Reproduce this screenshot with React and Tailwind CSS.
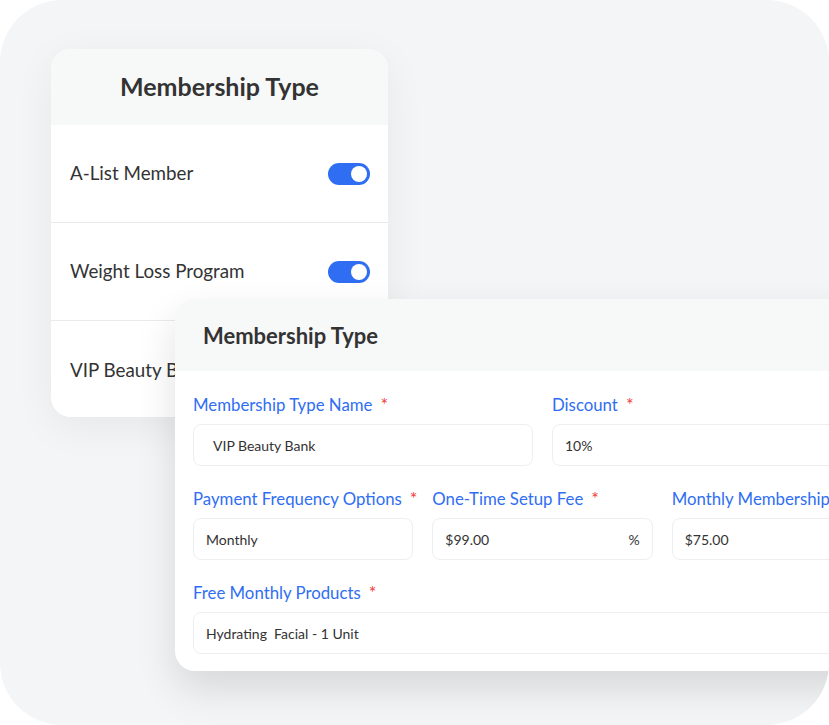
import React from "react";

const Toggle = () => (
  <div className="w-[42px] h-[22px] rounded-full bg-[#2f6ef3] flex items-center justify-end pr-[3px]">
    <div className="w-[16px] h-[16px] rounded-full bg-white" />
  </div>
);

const Label = ({ text }) => (
  <div className="h-[16px] text-[16.8px] text-[#2f6ef3] leading-[12px] mb-[13px] whitespace-nowrap">
    {text}
    <span className="text-[#f23b3b] ml-[8px] text-[18px] leading-none">*</span>
  </div>
);

const Field = ({ value, suffix, pad = "pl-[12px]" }) => (
  <div
    className={`h-[42px] rounded-[8px] border border-[#eceef1] bg-white flex items-center justify-between ${pad} pr-[12px] text-[14px] text-[#333]`}
  >
    <span className="whitespace-pre">{value}</span>
    {suffix && <span>{suffix}</span>}
  </div>
);

const App = () => {
  const types = ["A-List Member", "Weight Loss Program", "VIP Beauty Bank"];

  return (
    <div className="w-[829px] h-[725px] bg-white" style={{ fontFamily: "Lato, 'Noto Sans', sans-serif" }}>
      <div className="relative w-full h-full bg-[#f4f5f7] rounded-[62px] overflow-hidden pt-[49px] pl-[51px]">
        {/* back card */}
        <div className="w-[337px] h-[368px] bg-white rounded-[20px] overflow-hidden shadow-[0_10px_40px_rgba(0,0,0,0.06)]">
          <div className="h-[76px] bg-[#f7f8f8] flex items-center justify-center">
            <h2 className="text-[25px] font-bold text-[#333]">Membership Type</h2>
          </div>
          {types.map((t, i) => (
            <div
              key={t}
              className={`h-[98px] flex items-center justify-between pl-[19px] pr-[18px] ${i < 2 ? "border-b border-[#e9eaec]" : ""}`}
            >
              <span className="text-[18.8px] text-[#333] whitespace-nowrap">{t}</span>
              {i < 2 && <Toggle />}
            </div>
          ))}
        </div>

        {/* front card */}
        <div className="absolute left-[175px] top-[299px] w-[735px] h-[372px] bg-white rounded-[20px] overflow-hidden shadow-[0_18px_40px_rgba(0,0,0,0.12)]">
          <div className="h-[72px] bg-[#f7f8f8] flex items-center pl-[28px]">
            <h2 className="text-[22px] font-bold text-[#333]">Membership Type</h2>
          </div>
          <div className="px-[18px] pt-[24px] flex flex-col gap-[23px]">
            <div className="grid grid-cols-2 gap-[19px]">
              <div>
                <Label text="Membership Type Name" />
                <Field value="VIP Beauty Bank" pad="pl-[19px]" />
              </div>
              <div>
                <Label text="Discount" />
                <Field value="10%" />
              </div>
            </div>
            <div className="grid grid-cols-3 gap-[19px]">
              <div>
                <Label text="Payment Frequency Options" />
                <Field value="Monthly" />
              </div>
              <div>
                <Label text="One-Time Setup Fee" />
                <Field value="$99.00" suffix="%" />
              </div>
              <div>
                <Label text="Monthly Membership Fee" />
                <Field value="$75.00" />
              </div>
            </div>
            <div>
              <Label text="Free Monthly Products" />
              <Field value="Hydrating  Facial - 1 Unit" />
            </div>
          </div>
        </div>
      </div>
    </div>
  );
};

export default App;
